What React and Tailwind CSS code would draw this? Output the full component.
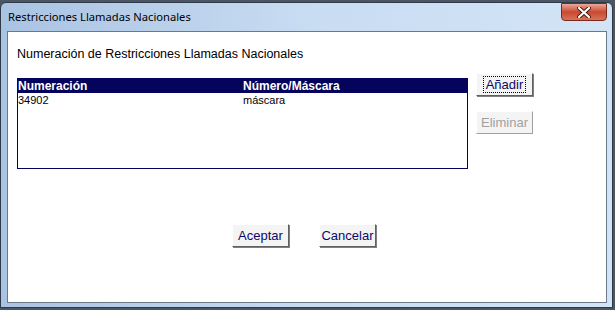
import React from 'react';

const Btn = ({ children, focused, disabled, className = '' }) => (
    <div
        className={`flex items-center justify-center h-[23px] w-[57px] bg-[#f4f4f4] border border-t-white border-l-white ${
            disabled
                ? 'border-r-[#a0a0a0] border-b-[#a0a0a0] text-[#a0a0a0]'
                : 'border-r-[#606060] border-b-[#606060] shadow-[1px_1px_0_#808080] text-[#0a0a6a]'
        } ${className}`}
    >
        <span
            className={`px-[2px] leading-[15px] ${focused ? 'outline outline-1 outline-dotted outline-black' : ''}`}
        >
            {children}
        </span>
    </div>
);

const rows = [{ id: 1, numeracion: '34902', mascara: 'máscara' }];

const App = () => {
    return (
        <div className="w-[615px] h-[310px] bg-[#4b5563] overflow-hidden font-['Liberation_Sans',Arial,sans-serif]">
            {/* window frame */}
            <div className="mt-[2px] w-[613px] h-[306px] rounded-t-[6px] border border-[#2f3a48] bg-gradient-to-r from-[#a9c3e2] via-[#c8dcf2] to-[#d3e4f6] flex flex-col">
                {/* title bar */}
                <div className="h-[28px] flex items-start justify-between pl-[7px] pr-[5px]">
                    <span className="mt-[6px] text-[11.2px] leading-[16px] text-black font-['Noto_Sans',sans-serif]">
                        Restricciones Llamadas Nacionales
                    </span>
                    <div className="w-[46px] h-[18px] rounded-b-[4px] border border-[#7a2a1c] bg-gradient-to-b from-[#e9a898] via-[#c8482f] to-[#d5735a] flex items-center justify-center">
                        <svg width="14" height="11" viewBox="0 0 14 11">
                            <path
                                d="M2 1 L12 10 M12 1 L2 10"
                                stroke="#3a1a14"
                                strokeWidth="4"
                                strokeLinecap="round"
                            />
                            <path
                                d="M2 1 L12 10 M12 1 L2 10"
                                stroke="#ffffff"
                                strokeWidth="2.2"
                                strokeLinecap="round"
                            />
                        </svg>
                    </div>
                </div>

                {/* client area */}
                <div className="ml-[6px] w-[600px] h-[272px] bg-white border border-[#6a7888] pl-[9px] pt-[15px]">
                    <div className="text-[12.5px] leading-[15px] text-black">
                        Numeración de Restricciones Llamadas Nacionales
                    </div>

                    <div className="flex mt-[11px]">
                        <div className="mt-[5px] w-[451px] h-[91px] border border-[#04045c] text-[11px] leading-[13px]">
                            <div className="flex h-[14px] bg-[#04045c] text-white font-bold text-[12px] leading-[14px]">
                                <span className="w-[225px]">Numeración</span>
                                <span>Número/Máscara</span>
                            </div>
                            {rows.map((row) => (
                                <div key={row.id} className="flex h-[13px] mt-[1px] text-black">
                                    <span className="w-[225px]">{row.numeracion}</span>
                                    <span>{row.mascara}</span>
                                </div>
                            ))}
                        </div>

                        <div className="ml-[8px] flex flex-col text-[13px]">
                            <Btn focused>Añadir</Btn>
                            <Btn disabled className="mt-[15px]">
                                Eliminar
                            </Btn>
                        </div>
                    </div>

                    <div className="flex mt-[55px] pl-[215px] text-[13px]">
                        <Btn>Aceptar</Btn>
                        <Btn className="ml-[30px]">Cancelar</Btn>
                    </div>
                </div>
            </div>
        </div>
    );
};

export default App;
